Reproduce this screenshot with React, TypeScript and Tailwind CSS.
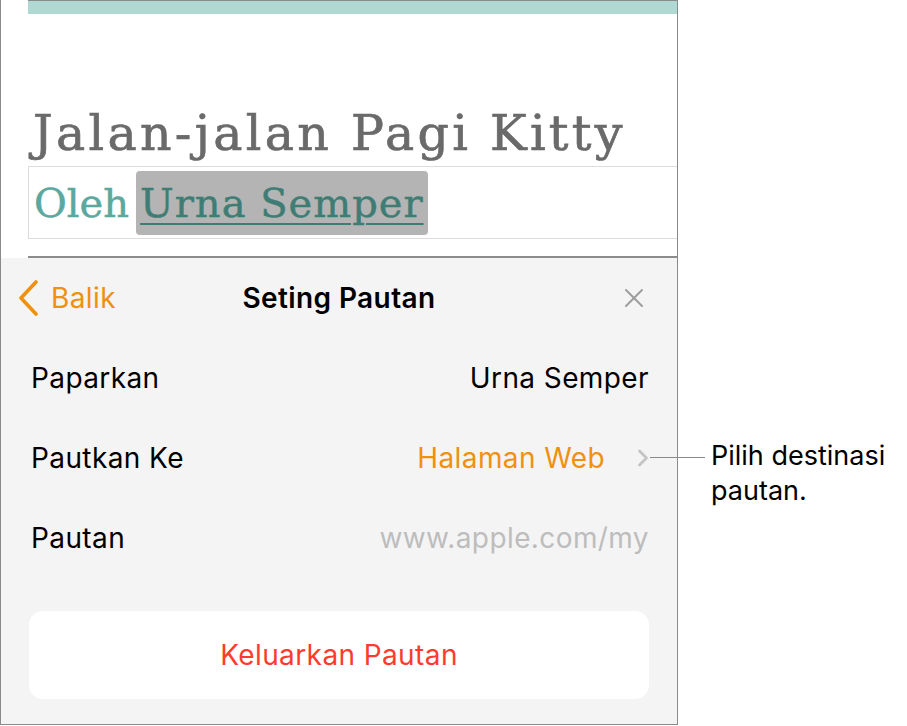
import { ChevronRight, X } from "lucide-react";

const sans = "font-['Inter','Roboto','Liberation_Sans',sans-serif]";
const serif = "font-['DejaVu_Serif','Liberation_Serif',serif]";
const txt = "text-[28px] tracking-[0.4px]";

function Row({ label, children }: { label: string; children: React.ReactNode }) {
  return (
    <div className="flex h-[80px] items-center justify-between pl-[30px] pr-[28px]">
      <span className={`${txt} text-black`}>{label}</span>
      {children}
    </div>
  );
}

export default function App() {
  return (
    <div className={`relative h-[726px] w-[907px] overflow-hidden bg-white ${sans}`}>
      <div className="flex h-[725px] w-[678px] flex-col border-b border-l border-r border-[#8a8a8a]">
        {/* document */}
        <div className="h-[258px] bg-white pl-[27px]">
          <div className="h-[14px] border-t border-[#8a8a8a] bg-[#b1d9d4]" />
          <div
            className={`mt-[92px] pl-[5px] text-[49px] leading-[56px] tracking-[3.3px] text-[#6a6a6a] [-webkit-text-stroke:0.7px_#6a6a6a] ${serif}`}
          >
            Jalan-jalan Pagi Kitty
          </div>
          <div className="mt-[4px] flex h-[73px] items-center border-y border-l border-[#dcdcdc] pl-[5px]">
            <span className={`text-[40px] text-[#5ba89e] [-webkit-text-stroke:0.5px_#5ba89e] ${serif}`}>Oleh</span>
            <span
              className={`ml-[7px] flex h-[64px] items-center rounded-[4px] bg-[#b4b4b4] px-[4px] text-[40px] tracking-[1px] text-[#3f7d74] underline decoration-[1.5px] underline-offset-[6px] [-webkit-text-stroke:0.5px_#3f7d74] ${serif}`}
            >
              Urna Semper
            </span>
          </div>
          <div className="mt-[17px] h-[3px] border-b border-[#dedede] bg-[#8c8c8c]" />
        </div>

        {/* link settings panel */}
        <div className="flex flex-1 flex-col bg-[#f4f4f4]">
          <div className="relative flex h-[80px] items-center justify-center">
            <div className="absolute left-[15px] flex items-center text-[#f0900f]">
              <svg width="24" height="36" viewBox="0 0 24 36" fill="none">
                <path d="M20 2 L5 18 L20 34" stroke="#f0900f" strokeWidth="3.6" strokeLinecap="round" strokeLinejoin="round" />
              </svg>
              <span className={`ml-[11px] ${txt}`}>Balik</span>
            </div>
            <span className={`${txt} font-semibold text-black`}>Seting Pautan</span>
            <X className="absolute right-[27px]" size={32} strokeWidth={1.5} color="#9c9c9c" />
          </div>

          <Row label="Paparkan">
            <span className={`${txt} text-black`}>Urna Semper</span>
          </Row>
          <Row label="Pautkan Ke">
            <div className="flex items-center">
              <span className={`${txt} text-[#f0900f]`}>Halaman Web</span>
              <ChevronRight className="ml-[24px] mr-[-8px]" size={28} strokeWidth={2.4} color="#c4c4c4" />
            </div>
          </Row>
          <Row label="Pautan">
            <span className={`${txt} text-[#bdbdbd]`}>www.apple.com/my</span>
          </Row>

          <div className="mx-[28px] mt-[33px] flex h-[88px] items-center justify-center rounded-[14px] bg-white">
            <span className={`${txt} text-[#ff3b30]`}>Keluarkan Pautan</span>
          </div>
        </div>
      </div>

      {/* callout */}
      <div className="absolute left-[650px] top-[438px] flex items-start">
        <div className="mt-[19px] h-px w-[55px] bg-[#8a8a8a]" />
        <div className="ml-[6px] text-[27px] leading-[35px] text-black">
          Pilih destinasi
          <br />
          pautan.
        </div>
      </div>
    </div>
  );
}
